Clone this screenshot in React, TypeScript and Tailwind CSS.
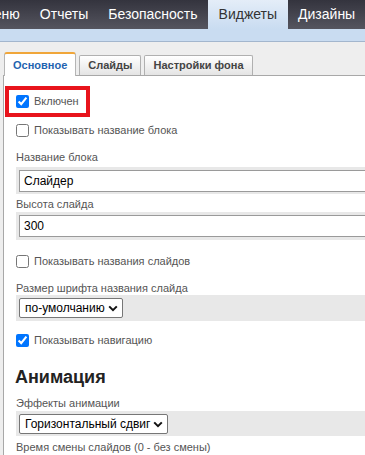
import React from 'react'

const navItems = [
    { label: 'Меню', active: false },
    { label: 'Отчеты', active: false },
    { label: 'Безопасность', active: false },
    { label: 'Виджеты', active: true },
    { label: 'Дизайны', active: false },
]

function Chevron() {
    return (
        <svg width="10" height="7" viewBox="0 0 10 7" className="shrink-0">
            <path d="M1.2 1.4 L5 5.2 L8.8 1.4" fill="none" stroke="#111" strokeWidth="2" />
        </svg>
    )
}

function Check({ checked, label }: { checked?: boolean; label: string }) {
    return (
        <label className="flex items-center h-[16px] gap-[5px] text-[11px] text-[#555] whitespace-nowrap">
            <input type="checkbox" defaultChecked={checked} className="w-[13px] h-[13px] accent-[#0075ff]" />
            <span>{label}</span>
        </label>
    )
}

function Label({ text, className = '' }: { text: string; className?: string }) {
    return <div className={`h-[14px] leading-[14px] text-[11px] text-[#555] whitespace-nowrap ${className}`}>{text}</div>
}

function TextField({ value, className = '' }: { value: string; className?: string }) {
    return (
        <div className={`bg-[#e8e8e8] pl-[3px] pt-[3px] ${className}`}>
            <div className="h-[22px] w-[400px] bg-white border border-[#9a9a9a] flex items-center pl-[4px] text-[12px] text-black">
                {value}
            </div>
        </div>
    )
}

function SelectField({ value, width, className = '' }: { value: string; width: string; className?: string }) {
    return (
        <div className={`bg-[#e8e8e8] pl-[3px] pt-[3px] ${className}`}>
            <div className={`${width} h-[20px] bg-white border border-[#767676] rounded-[2px] flex items-center justify-between pl-[5px] pr-[4px] text-[12px] text-black whitespace-nowrap`}>
                <span>{value}</span>
                <Chevron />
            </div>
        </div>
    )
}

export default function App() {
    return (
        <div className="w-[365px] h-[455px] overflow-hidden bg-[#eeeeee] font-[family-name:'Liberation_Sans',Arial,sans-serif]">
            {/* top menu */}
            <div className="h-[29px] bg-gradient-to-b from-[#34343e] to-[#55555f] flex overflow-hidden">
                {navItems.map((item, i) => (
                    <div
                        key={i}
                        className={`h-full flex items-center text-[14px] whitespace-nowrap shrink-0 ${i === 0 ? 'ml-[-28px]' : ''} ${
                            item.active
                                ? 'px-[11px] bg-gradient-to-b from-[#e4edf8] to-[#c9dcf1] text-[#333]'
                                : 'px-[10px] text-white'
                        }`}
                    >
                        {item.label}
                    </div>
                ))}
            </div>
            <div className="h-[13px] bg-[#c9dcf1] border-b border-[#a3b6cd]" />

            {/* tabs */}
            <div className="mt-[11px] ml-[3px]">
                <div className="flex items-end pl-[1px] gap-[3px] h-[23px] border-b border-[#a8a8a8]">
                    <div className="h-[24px] -mb-[1px] px-[8px] bg-white border-x border-[#b5b5b5] border-t-2 border-t-[#f0a63a] rounded-t-[3px] flex items-center text-[11px] font-bold text-[#1f64b0]">
                        Основное
                    </div>
                    <div className="h-[20px] px-[8px] bg-gradient-to-b from-[#ffffff] to-[#e4e4e4] border border-b-0 border-[#b0b0b0] rounded-t-[2px] flex items-center text-[11px] font-bold text-[#444]">
                        Слайды
                    </div>
                    <div className="h-[20px] px-[8px] bg-gradient-to-b from-[#ffffff] to-[#e4e4e4] border border-b-0 border-[#b0b0b0] rounded-t-[2px] flex items-center text-[11px] font-bold text-[#444]">
                        Настройки фона
                    </div>
                </div>

                {/* panel */}
                <div className="bg-white border-l border-[#a8a8a8] h-[400px] pl-[12px] flex flex-col">
                    <div className="mt-[10px] -ml-[11px] w-[85px] h-[31px] border-4 border-[#e8141c] pl-[7px] flex items-center">
                        <Check checked label="Включен" />
                    </div>
                    <div className="mt-[5px]">
                        <Check label="Показывать название блока" />
                    </div>

                    <Label text="Название блока" className="mt-[12px]" />
                    <TextField value="Слайдер" className="mt-[3px] h-[27px]" />

                    <Label text="Высота слайда" className="mt-[3px]" />
                    <TextField value="300" className="mt-[1px] h-[28px]" />

                    <div className="mt-[13px]">
                        <Check label="Показывать названия слайдов" />
                    </div>

                    <Label text="Размер шрифта названия слайда" className="mt-[12px]" />
                    <SelectField value="по-умолчанию" width="w-[104px]" className="h-[26px]" />

                    <div className="mt-[11px]">
                        <Check checked label="Показывать навигацию" />
                    </div>

                    <h2 className="mt-[18px] -ml-[1px] h-[22px] leading-[22px] text-[18px] font-bold text-[#222]">Анимация</h2>

                    <Label text="Эффекты анимации" className="mt-[8px]" />
                    <SelectField value="Горизонтальный сдвиг" width="w-[149px]" className="mt-[1px] h-[25px]" />

                    <Label text="Время смены слайдов (0 - без смены)" className="mt-[4px]" />
                </div>
            </div>
        </div>
    )
}
